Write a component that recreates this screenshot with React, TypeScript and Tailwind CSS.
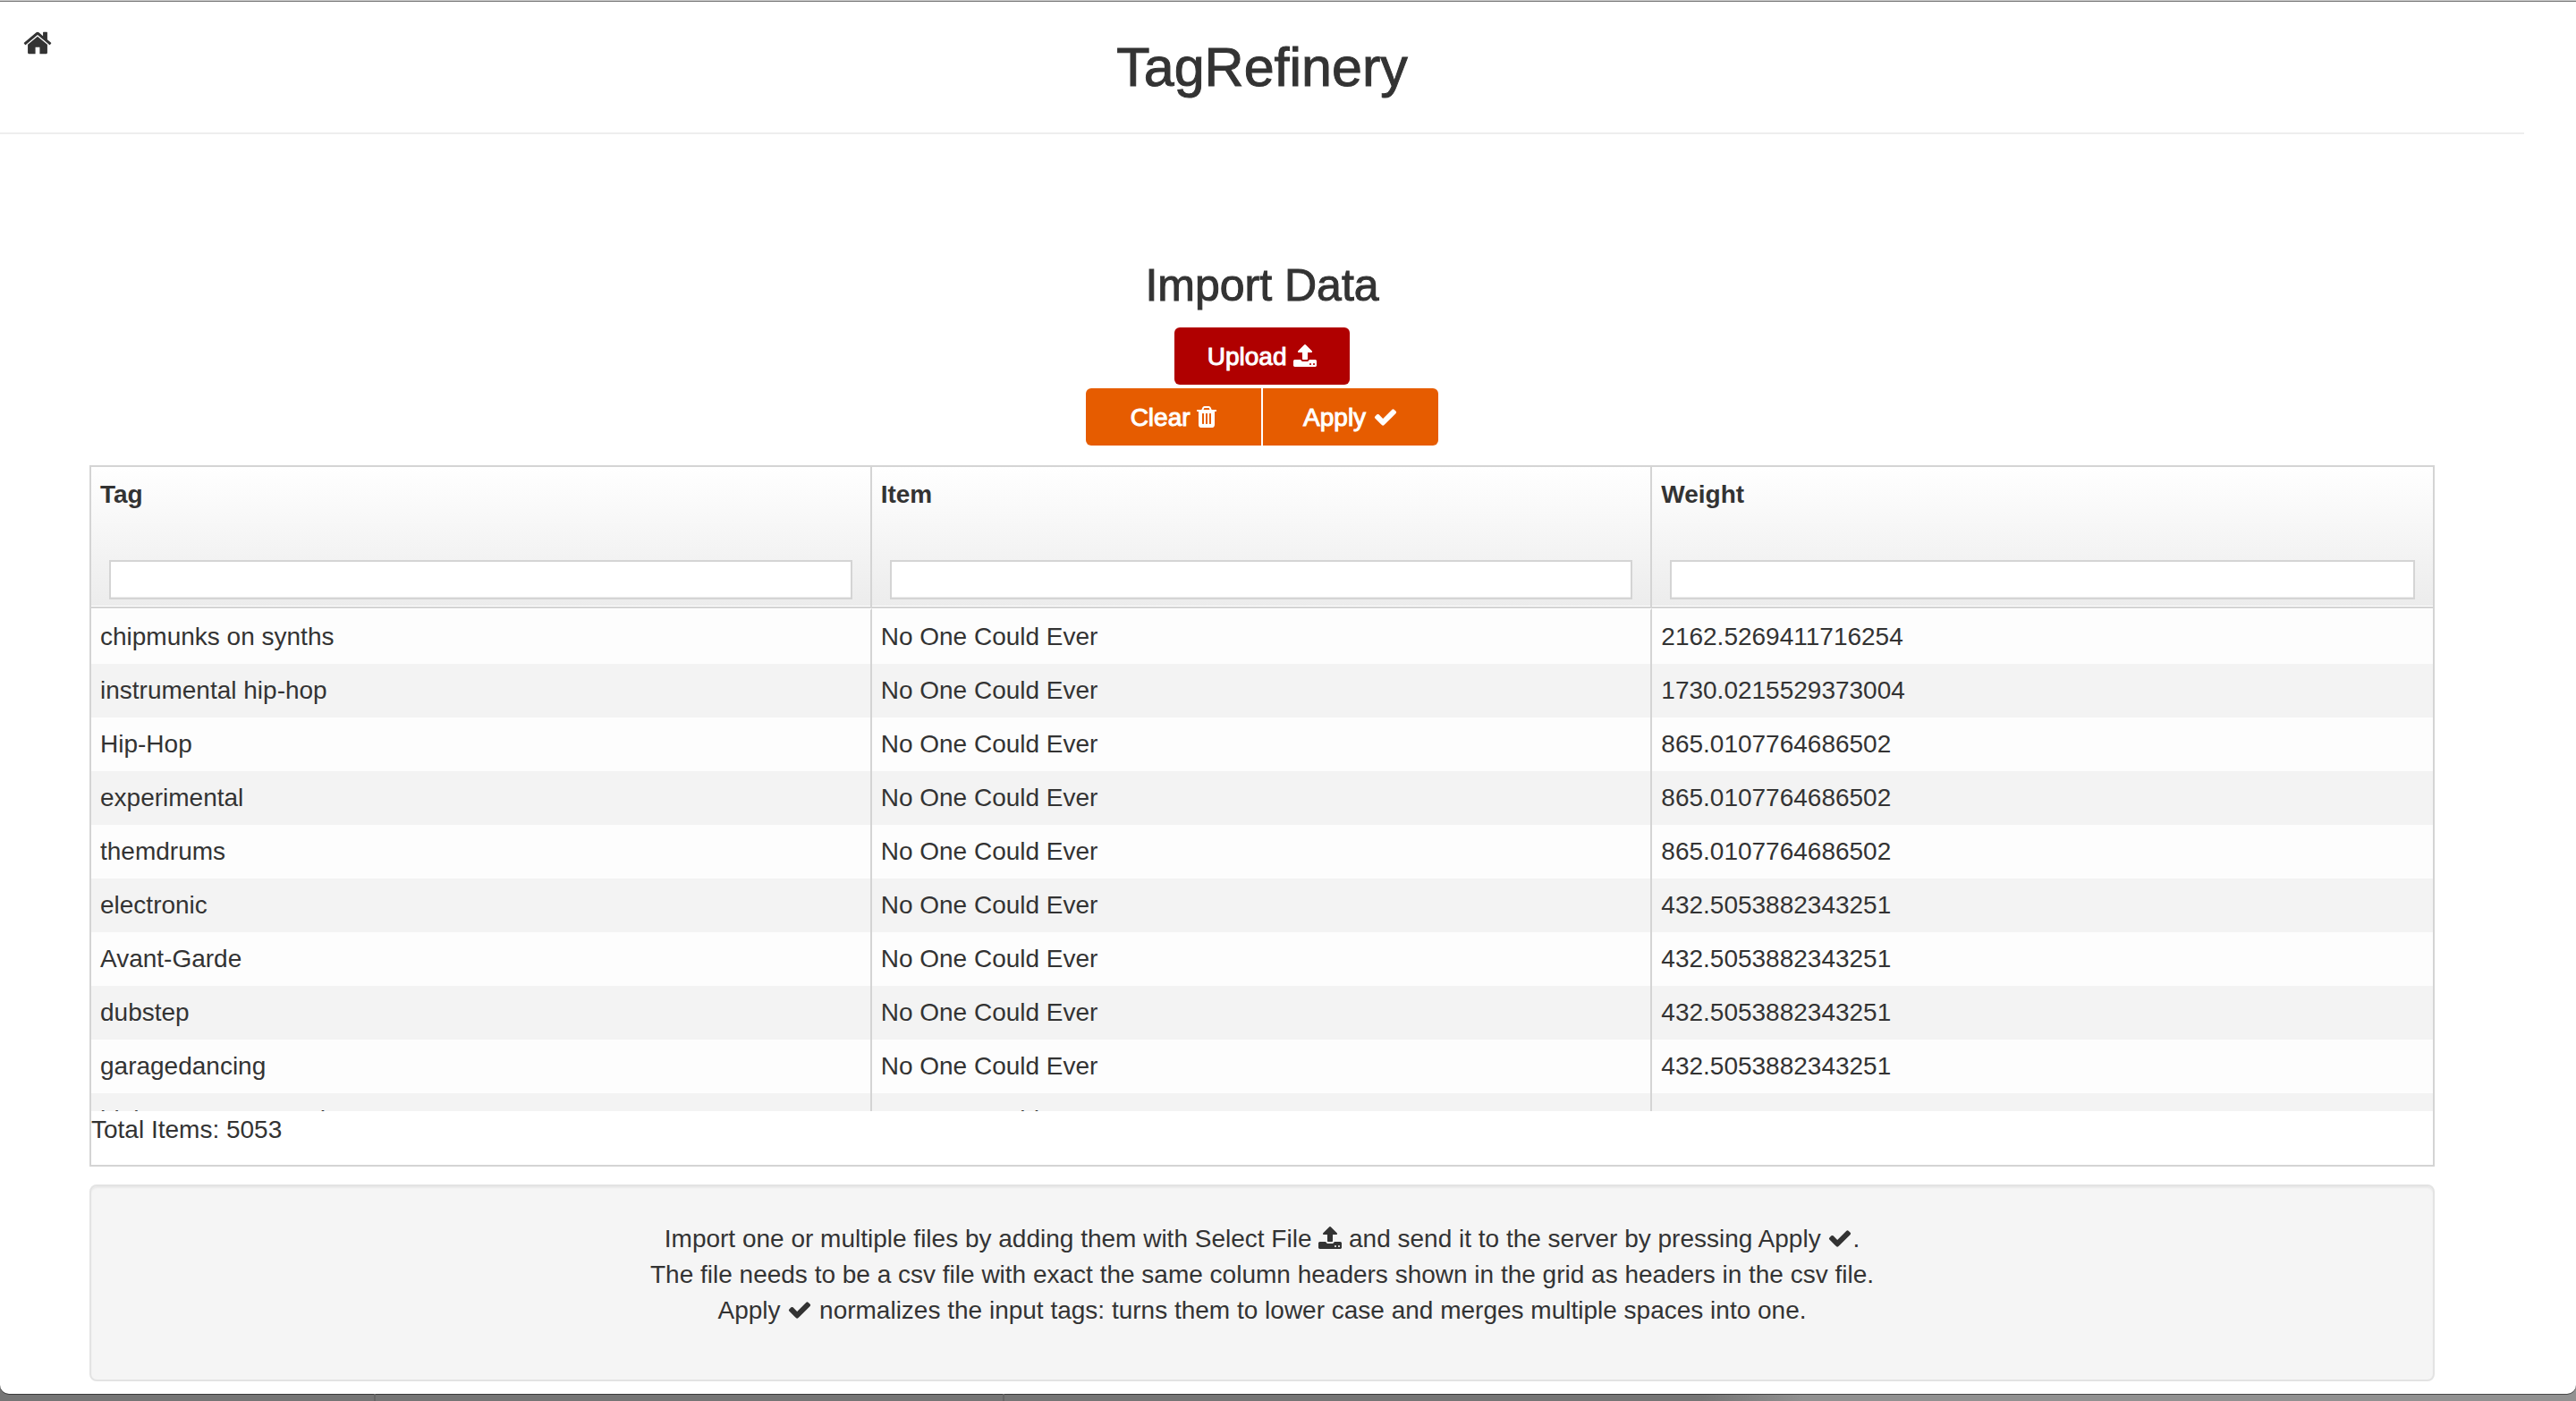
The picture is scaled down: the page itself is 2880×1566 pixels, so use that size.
import React from "react";

type IconProps = { className?: string };

function HomeIcon({ className = "" }: IconProps) {
  return (
    <svg viewBox="0 0 1792 1792" fill="currentColor" aria-hidden="true" className={className}>
      <path d="M1472 992v480q0 26-19 45t-45 19h-384v-384h-256v384h-384q-26 0-45-19t-19-45v-480q0-1 .5-3t.5-3l575-474 575 474q1 2 1 6zm223-69l-62 74q-8 9-21 11h-3q-13 0-21-7l-692-577-692 577q-12 8-24 7-13-2-21-11l-62-74q-8-10-7-23.5t11-21.5l719-599q32-26 76-26t76 26l244 204v-195q0-14 9-23t23-9h192q14 0 23 9t9 23v408l219 182q10 8 11 21.5t-7 23.5z" />
    </svg>
  );
}

function UploadIcon() {
  return (
    <svg viewBox="64 0 1664 1792" fill="currentColor" aria-hidden="true" className="inline-block h-7 w-[26px] align-[-4px]">
      <path d="M1344 1472q0-26-19-45t-45-19-45 19-19 45 19 45 45 19 45-19 19-45zm256 0q0-26-19-45t-45-19-45 19-19 45 19 45 45 19 45-19 19-45zm128-224v320q0 40-28 68t-68 28h-1472q-40 0-68-28t-28-68v-320q0-40 28-68t68-28h427q21 56 70.5 92t110.5 36h256q61 0 110.5-36t70.5-92h427q40 0 68 28t28 68zm-325-648q-17 40-59 40h-256v448q0 26-19 45t-45 19h-256q-26 0-45-19t-19-45v-448h-256q-42 0-59-40-17-39 14-69l448-448q18-19 45-19t45 19l448 448q31 30 14 69z" />
    </svg>
  );
}

function TrashIcon() {
  return (
    <svg viewBox="192 0 1408 1792" fill="currentColor" aria-hidden="true" className="inline-block h-7 w-[22px] align-[-4px]">
      <path d="M704 1376v-704q0-14-9-23t-23-9h-64q-14 0-23 9t-9 23v704q0 14 9 23t23 9h64q14 0 23-9t9-23zm256 0v-704q0-14-9-23t-23-9h-64q-14 0-23 9t-9 23v704q0 14 9 23t23 9h64q14 0 23-9t9-23zm256 0v-704q0-14-9-23t-23-9h-64q-14 0-23 9t-9 23v704q0 14 9 23t23 9h64q14 0 23-9t9-23zm-544-992h448l-48-117q-7-9-17-11h-317q-10 2-17 11zm928 32v64q0 14-9 23t-23 9h-96v948q0 83-47 143.5t-113 60.5h-832q-66 0-113-58.5t-47-141.5v-952h-96q-14 0-23-9t-9-23v-64q0-14 9-23t23-9h309l70-167q15-37 54-63t79-26h320q40 0 79 26t54 63l70 167h309q14 0 23 9t9 23z" />
    </svg>
  );
}

function CheckIcon() {
  return (
    <svg viewBox="0 0 1792 1792" fill="currentColor" aria-hidden="true" className="inline-block h-7 w-7 align-[-4px]">
      <path d="M1671 566q0 40-28 68l-724 724-136 136q-28 28-68 28t-68-28l-136-136-362-362q-28-28-28-68t28-68l136-136q28-28 68-28t68 28l294 295 656-657q28-28 68-28t68 28l136 136q28 28 28 68z" />
    </svg>
  );
}

const columns = ["Tag", "Item", "Weight"];

const rows: [string, string, string][] = [
  ["chipmunks on synths", "No One Could Ever", "2162.5269411716254"],
  ["instrumental hip-hop", "No One Could Ever", "1730.0215529373004"],
  ["Hip-Hop", "No One Could Ever", "865.0107764686502"],
  ["experimental", "No One Could Ever", "865.0107764686502"],
  ["themdrums", "No One Could Ever", "865.0107764686502"],
  ["electronic", "No One Could Ever", "432.5053882343251"],
  ["Avant-Garde", "No One Could Ever", "432.5053882343251"],
  ["dubstep", "No One Could Ever", "432.5053882343251"],
  ["garagedancing", "No One Could Ever", "432.5053882343251"],
  ["high common sound", "No One Could Ever", "432.5053882343251"],
];

const buttonBase =
  "h-16 w-[196px] pt-0.5 text-center text-white [-webkit-text-stroke:1px_currentColor]";

function DataGrid() {
  return (
    <section className="mt-[22px] border-2 border-[#d4d4d4]">
      <div className="h-[720px] overflow-hidden">
        <table className="w-full table-fixed border-separate border-spacing-0 text-left">
          <thead>
            <tr>
              {columns.map((name) => (
                <th
                  key={name}
                  scope="col"
                  className="border-r-2 border-b-2 border-[#d4d4d4] bg-linear-to-b from-white to-[#ececec] bg-clip-padding px-2.5 pt-[11px] pb-2 align-top font-bold shadow-[inset_0_-1px_0_#fff] last:border-r-0"
                >
                  <label htmlFor={"filter-" + name} className="block">
                    {name}
                  </label>
                  <div className="mt-[53px] px-2.5">
                    <input
                      id={"filter-" + name}
                      type="text"
                      className="block h-11 w-full border-2 border-[#d4d4d4] bg-white px-2 font-normal shadow-[inset_0_-1px_0_#eee] outline-none"
                    />
                  </div>
                </th>
              ))}
            </tr>
          </thead>
          <tbody className="[&>tr:first-child>td]:border-t-2 [&>tr:first-child>td]:border-t-white">
            {rows.map((row, i) => (
              <tr key={i} className="odd:bg-[#fdfdfd] even:bg-[#f3f3f3]">
                {row.map((cell, j) => (
                  <td key={j} className="truncate border-r-2 border-[#d4d4d4] p-2.5 last:border-r-0">
                    {cell}
                  </td>
                ))}
              </tr>
            ))}
          </tbody>
        </table>
      </div>
      <div className="h-[60px] pt-px">Total Items: 5053</div>
    </section>
  );
}

export default function App() {
  return (
    <div className="bg-linear-to-r from-[#757575] from-66% to-[#919191] to-70% font-['Liberation_Sans',Arial,sans-serif] text-[28px] leading-10 text-[#333]">
      <div className="rounded-b-[10px] border-t border-[#cccccc] bg-white pb-3.5 shadow-[0_1px_0_rgba(0,0,0,0.5)]">
        <div className="border-t border-[#777] pr-[58px]">
          <header className="grid grid-cols-[1fr_auto_1fr] items-start border-b-2 border-[#eee] pt-[29px] pb-10">
            <a href="#home" aria-label="Home" className="justify-self-start pl-[25px]">
              <HomeIcon className="block size-[34px]" />
            </a>
            <h1 className="mt-[11px] text-[61px] leading-[66px] [-webkit-text-stroke:1px_currentColor]">
              TagRefinery
            </h1>
          </header>

          <main className="pt-[142px] pl-[100px]">
            <div className="mr-[100px] flex flex-col items-center">
              <h2 className="text-[50px] leading-[54px] [-webkit-text-stroke:1px_currentColor]">
                Import Data
              </h2>
              <button type="button" className={buttonBase + " mt-5 rounded-md bg-[#b00000]"}>
                Upload <UploadIcon />
              </button>
              <div className="mt-1 flex gap-0.5">
                <button type="button" className={buttonBase + " rounded-l-md bg-[#e65c00]"}>
                  Clear <TrashIcon />
                </button>
                <button type="button" className={buttonBase + " rounded-r-md bg-[#e65c00]"}>
                  Apply <CheckIcon />
                </button>
              </div>
            </div>

            <div className="mr-[100px]">
              <DataGrid />
              <section className="mt-5 rounded-lg border-2 border-[#e3e3e3] bg-[#f5f5f5] px-10 pt-[39px] pb-[57px] text-center shadow-[inset_0_2px_2px_rgba(0,0,0,0.05)]">
                <p>
                  Import one or multiple files by adding them with Select File <UploadIcon /> and send it to the
                  server by pressing Apply <CheckIcon />.
                </p>
                <p>
                  The file needs to be a csv file with exact the same column headers shown in the grid as headers in
                  the csv file.
                </p>
                <p>
                  Apply <CheckIcon /> normalizes the input tags: turns them to lower case and merges multiple spaces
                  into one.
                </p>
              </section>
            </div>
          </main>
        </div>
      </div>
      <div className="flex h-2">
        <div className="w-[14.6%] border-r-2 border-[#666]" />
        <div className="w-[24.4%] border-r-2 border-[#666]" />
      </div>
    </div>
  );
}
